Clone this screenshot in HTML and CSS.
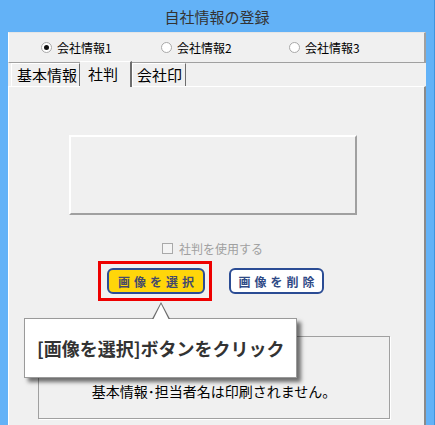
FILE: index.html
```html
<!DOCTYPE html>
<html lang="ja">
<head>
    <meta charset="UTF-8">
    <title>自社情報の登録</title>
    <link rel="stylesheet" href="styles.css">
</head>
<body>
    <div class="window">
        <div class="titlebar">自社情報の登録</div>
        <div class="client">
            <div class="company-select">
                <label class="radio radio-1"><span class="radio-mark checked"></span>会社情報1</label>
                <label class="radio radio-2"><span class="radio-mark"></span>会社情報2</label>
                <label class="radio radio-3"><span class="radio-mark"></span>会社情報3</label>
            </div>

            <div class="tabs">
                <div class="tab tab-basic">基本情報</div>
                <div class="tab tab-stamp active">社判</div>
                <div class="tab tab-seal">会社印</div>
            </div>

            <div class="tab-panel">
                <div class="stamp-preview"></div>

                <label class="use-stamp"><span class="checkbox"></span>社判を使用する</label>

                <div class="button-row">
                    <div class="highlight">
                        <button class="btn btn-select">画像を選択</button>
                    </div>
                    <button class="btn btn-delete">画像を削除</button>
                </div>

                <div class="note-box">基本情報･担当者名は印刷されません。</div>

                <div class="callout">[画像を選択]ボタンをクリック</div>
            </div>
        </div>
    </div>
</body>
</html>
```

FILE: styles.css
```css
body {
    margin: 0;
    font-family: "Noto Sans CJK JP", "Noto Sans", sans-serif;
    color: #000;
}
.window {
    width: 435px;
    height: 425px;
    box-sizing: border-box;
    background-color: #63b2f7;
    padding: 0 8px 0 8px;
    border-right: 1px solid #3f94de;
    display: flex;
    flex-direction: column;
    overflow: hidden;
}
.titlebar {
    height: 32px;
    line-height: 34px;
    text-align: center;
    font-size: 15px;
    color: #333;
    flex-shrink: 0;
}
.client {
    flex: 1;
    background-color: #f0f0f0;
    display: flex;
    flex-direction: column;
}
.company-select {
    height: 29px;
    border-top: 1px solid #e6e6e6;
    border-left: 1px solid #fff;
    border-right: 2px solid #a0a0a0;
    border-bottom: 1px solid #a0a0a0;
    display: flex;
    align-items: center;
    font-size: 12px;
    padding-left: 32px;
}
.radio {
    display: flex;
    align-items: center;
    gap: 5px;
}
.radio-1 { width: 120px; }
.radio-2 { width: 128px; }
.radio-mark {
    width: 9px;
    height: 9px;
    border: 1px solid #a9a9a9;
    border-radius: 50%;
    background-color: #fff;
    position: relative;
}
.radio-mark.checked:after {
    content: "";
    position: absolute;
    left: 2px;
    top: 2px;
    width: 5px;
    height: 5px;
    border-radius: 50%;
    background-color: #111;
}
.tabs {
    height: 23px;
    display: flex;
    align-items: flex-end;
    padding-left: 3px;
    position: relative;
    z-index: 1;
}
.tab {
    height: 23px;
    line-height: 22px;
    font-size: 15px;
    border-top: 1px solid #fff;
    border-left: 1px solid #fff;
    border-right: 1px solid #6d6d6d;
    background-color: #f0f0f0;
    box-sizing: border-box;
}
.tab-basic {
    width: 69px;
    padding-left: 5px;
}
.tab-stamp {
    width: 52px;
    padding-left: 8px;
}
.tab-seal {
    width: 54px;
    padding-left: 4px;
}
.tab.active {
    height: 26px;
    margin-bottom: -1px;
    line-height: 23px;
    border-left: none;
    border-right: 2px solid #6d6d6d;
}
.tab-panel {
    flex: 1;
    border-top: 1px solid #fff;
    border-left: 1px solid #fff;
    border-right: 2px solid #8a8a8a;
    position: relative;
    display: flex;
    flex-direction: column;
}
.stamp-preview {
    width: 288px;
    height: 80px;
    box-sizing: border-box;
    margin: 48px 0 0 60px;
    border-top: 2px solid #fff;
    border-left: 2px solid #fff;
    border-right: 2px solid #a0a0a0;
    border-bottom: 2px solid #a0a0a0;
}
.use-stamp {
    display: flex;
    align-items: center;
    gap: 6px;
    margin: 25px 0 0 153px;
    height: 16px;
    font-size: 12px;
    color: #a0a0a0;
}
.checkbox {
    width: 9px;
    height: 9px;
    border: 1px solid #a9a9a9;
    background-color: #f4f4f4;
}
.button-row {
    display: flex;
    align-items: center;
    gap: 17px;
    margin: 5px 0 0 89px;
}
.highlight {
    border: 3px solid #ee0000;
    padding: 4px 4px 4px 6px;
    display: flex;
}
.btn {
    height: 26px;
    box-sizing: border-box;
    border: 2px solid #2b4c94;
    border-radius: 6px;
    font-family: "Noto Sans CJK JP", sans-serif;
    font-size: 12px;
    font-weight: bold;
    letter-spacing: 4px;
    color: #2f4a86;
    padding: 0 0 0 4px;
    cursor: pointer;
}
.btn-select {
    width: 98px;
    background-color: #ffd60a;
    color: #454a6a;
}
.btn-delete {
    width: 95px;
    background-color: #fff;
}
.note-box {
    width: 352px;
    height: 83px;
    box-sizing: border-box;
    margin: 35px 0 0 29px;
    border: 1px solid #a0a0a0;
    box-shadow: 1px 1px 0 #fff;
    padding-top: 44px;
    line-height: 20px;
    text-align: center;
    font-size: 14px;
}
.callout {
    position: absolute;
    left: 15px;
    top: 231px;
    width: 273px;
    height: 60px;
    box-sizing: border-box;
    background-color: #fff;
    border: 1px solid #9a9a9a;
    box-shadow: 4px 4px 4px rgba(0, 0, 0, 0.55);
    padding-left: 12px;
    line-height: 58px;
    font-size: 18px;
    font-weight: bold;
    color: #333;
}
.callout:before {
    content: "";
    position: absolute;
    left: 127px;
    top: -17px;
    border-width: 0 9px 17px 9px;
    border-style: solid;
    border-color: transparent transparent #6a6a6a transparent;
}
.callout:after {
    content: "";
    position: absolute;
    left: 128px;
    top: -15px;
    border-width: 0 8px 16px 8px;
    border-style: solid;
    border-color: transparent transparent #fff transparent;
}
```
